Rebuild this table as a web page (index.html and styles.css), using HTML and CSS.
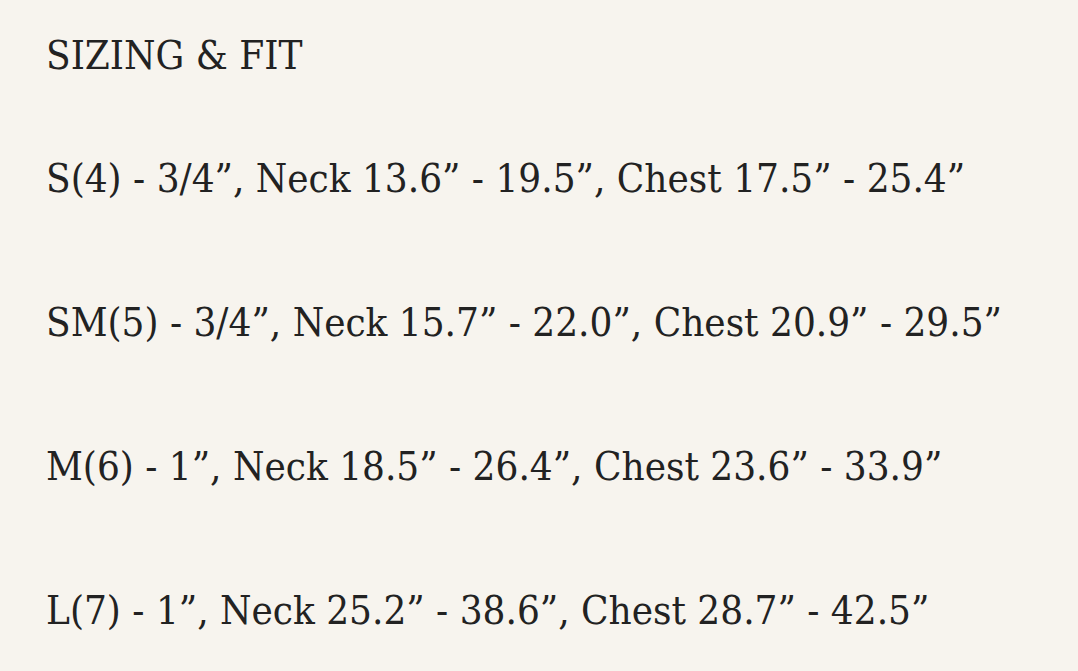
FILE: index.html
```html
<!DOCTYPE html>
<html lang="en">
<head>
<meta charset="utf-8">
<link rel="stylesheet" href="styles.css">
<title>Sizing &amp; Fit</title>
</head>
<body>
<main class="sizing">
  <h2 class="sizing-title">SIZING &amp; FIT</h2>
  <ul class="size-list">
    <li class="size-row">S(4) - 3/4”, Neck 13.6” - 19.5”, Chest 17.5” - 25.4”</li>
    <li class="size-row">SM(5) - 3/4”, Neck 15.7” - 22.0”, Chest 20.9” - 29.5”</li>
    <li class="size-row">M(6) - 1”, Neck 18.5” - 26.4”, Chest 23.6” - 33.9”</li>
    <li class="size-row">L(7) - 1”, Neck 25.2” - 38.6”, Chest 28.7” - 42.5”</li>
  </ul>
</main>
</body>
</html>
```
FILE: styles.css
```css
html, body {
  margin: 0;
  padding: 0;
  background: #f7f4ee;
}
body {
  width: 1078px;
  height: 671px;
  overflow: hidden;
  font-family: "DejaVu Serif Condensed", "DejaVu Serif", serif;
  font-stretch: condensed;
  color: #222222;
}
.sizing {
  display: flex;
  flex-direction: column;
  gap: 75px;
  padding: 31px 0 0 46px;
}
.sizing-title {
  margin: 0;
  font-size: 40px;
  line-height: 48px;
  font-weight: normal;
  white-space: nowrap;
}
.size-list {
  list-style: none;
  margin: 0;
  padding: 0;
  display: flex;
  flex-direction: column;
  gap: 96px;
}
.size-row {
  font-size: 40px;
  line-height: 48px;
  white-space: nowrap;
}
```
